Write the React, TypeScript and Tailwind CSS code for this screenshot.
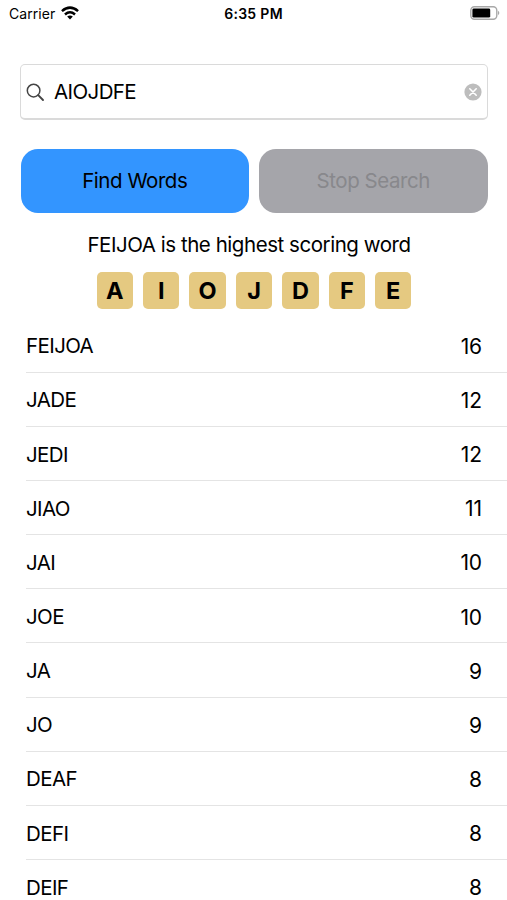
import React from 'react';

interface WordScore {
  word: string;
  score: number;
}

const LETTERS = ['A', 'I', 'O', 'J', 'D', 'F', 'E'];

const RESULTS: WordScore[] = [
  { word: 'FEIJOA', score: 16 },
  { word: 'JADE', score: 12 },
  { word: 'JEDI', score: 12 },
  { word: 'JIAO', score: 11 },
  { word: 'JAI', score: 10 },
  { word: 'JOE', score: 10 },
  { word: 'JA', score: 9 },
  { word: 'JO', score: 9 },
  { word: 'DEAF', score: 8 },
  { word: 'DEFI', score: 8 },
  { word: 'DEIF', score: 8 },
];

const StatusBar: React.FC = () => (
  <header className="grid h-[26px] shrink-0 grid-cols-3 items-center pr-[7px] pl-[9px] text-[14px]">
    <div className="flex items-center gap-[6px]">
      <span className="tracking-[0.05px]">Carrier</span>
      <svg width="18" height="14" viewBox="0 0 19 14" fill="none" stroke="black" strokeWidth="2.7">
        <path d="M1 5Q9.5 -2.2 18 5" />
        <path d="M4.2 8.5Q9.5 4 14.8 8.5" />
        <path d="M9.5 13.8L6.5 10.8Q9.5 8.4 12.5 10.8Z" fill="black" stroke="none" />
      </svg>
    </div>
    <span className="pr-[2px] text-center font-semibold tracking-[0.3px]">6:35 PM</span>
    <svg className="justify-self-end" width="30" height="14" viewBox="0 0 30 14">
      <rect x="0.8" y="0.8" width="26" height="12.4" rx="3.6" fill="none" stroke="#a8a8a8" strokeWidth="1.4" />
      <rect x="2.4" y="2.4" width="17.8" height="9.2" rx="1.4" fill="black" />
      <path d="M28 4.8Q30.6 7 28 9.2Z" fill="#a8a8a8" />
    </svg>
  </header>
);

export default function App() {
  return (
    <div className="flex h-[900px] w-[507px] flex-col overflow-hidden bg-white font-['Inter',sans-serif] text-[20.5px] tracking-[-0.45px] text-black">
      <StatusBar />
      <div className="mt-[38px] mr-[19px] ml-[20px] flex h-[56px] shrink-0 items-center rounded-[5px] border border-b-2 border-[#dadada] px-[5px] pt-px">
        <svg width="19" height="19" viewBox="0 0 19 19" fill="none" stroke="#444" strokeWidth="1.5" strokeLinecap="round">
          <circle cx="7.6" cy="7.6" r="6.3" />
          <path d="M12.2 12.2L17 17" strokeWidth="1.9" />
        </svg>
        <span className="ml-[9px] flex-1 tracking-[-0.6px]">AIOJDFE</span>
        <svg width="18" height="18" viewBox="0 0 18 18">
          <circle cx="9" cy="9" r="8.6" fill="#bdbdbd" />
          <path d="M5.8 5.8L12.2 12.2M12.2 5.8L5.8 12.2" stroke="white" strokeWidth="1.6" strokeLinecap="round" />
        </svg>
      </div>
      <div className="mt-[29px] mr-[19.5px] ml-[20.5px] grid h-[63.5px] shrink-0 grid-cols-2 gap-[10px]">
        <button className="rounded-[17px] bg-[#3395ff] pt-[2px]">Find Words</button>
        <button className="rounded-[17px] bg-[#a5a5aa] pt-[2px] text-[#88888c]">Stop Search</button>
      </div>
      <p className="mt-[17.5px] pr-[9px] text-center leading-[30px]">FEIJOA is the highest scoring word</p>
      <div className="mt-[12px] flex shrink-0 justify-center gap-[9.9px] pl-px">
        {LETTERS.map((letter) => (
          <div key={letter} className="flex size-[36.5px] items-center justify-center rounded-[5px] bg-[#e5c981] text-[23.5px] font-bold tracking-normal">
            {letter}
          </div>
        ))}
      </div>
      <ul className="mt-[10px] pl-[26px]">
        {RESULTS.map(({ word, score }) => (
          <li key={word} className="flex h-[54.17px] items-center justify-between border-b border-[#e4e4e4] pt-[3px] pr-[25px]">
            <span className="tracking-[-0.6px]">{word}</span>
            <span className="text-[21px] tracking-[-0.1px]">{score}</span>
          </li>
        ))}
      </ul>
    </div>
  );
}
